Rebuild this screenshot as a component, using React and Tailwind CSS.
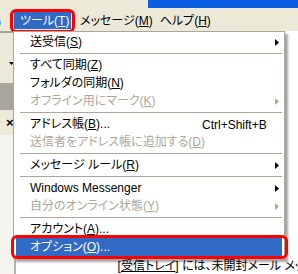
import React from "react";

function Label({ t, k, suffix }) {
  return (
    <span className="whitespace-nowrap">
      {t}
      {k ? (
        <>
          (<u className="underline-offset-1">{k}</u>)
        </>
      ) : null}
      {suffix}
    </span>
  );
}

function Arrow({ gray }) {
  return (
    <svg width="4" height="7" viewBox="0 0 4 7" className="block">
      <path d="M0 0 L4 3.5 L0 7 Z" fill={gray ? "#aca899" : "#000"} />
    </svg>
  );
}

const items = [
  { t: "送受信", k: "S", arrow: true },
  "sep",
  { t: "すべて同期", k: "Z" },
  { t: "フォルダの同期", k: "N" },
  { t: "オフライン用にマーク", k: "K", disabled: true, arrow: true },
  "sep",
  { t: "アドレス帳", k: "B", suffix: "...", shortcut: "Ctrl+Shift+B" },
  { t: "送信者をアドレス帳に追加する", k: "D", disabled: true },
  "sep",
  { t: "メッセージ ルール", k: "R", arrow: true },
  "sep",
  { t: "Windows Messenger", arrow: true },
  { t: "自分のオンライン状態", k: "Y", disabled: true, arrow: true },
  "sep",
  { t: "アカウント", k: "A", suffix: "..." },
  { t: "オプション", k: "O", suffix: "...", selected: true },
];

export default function App() {
  return (
    <div className="relative w-[298px] h-[274px] overflow-hidden bg-white text-[12px] leading-none text-black flex flex-col font-['Liberation_Sans','Noto_Sans_CJK_JP',sans-serif] [font-feature-settings:'palt']">
      {/* title bar */}
      <div className="h-[8px] shrink-0 bg-[#ece9d8] flex">
        <div className="w-[148px]" />
        <div className="flex-1 bg-[#0a5fe0]" />
      </div>
      {/* menu bar */}
      <div className="h-[23px] shrink-0 bg-[#ece9d8] flex items-center relative">
        <span className="absolute left-[-3px] top-[8px]">)</span>
        <div className="ml-[14px] h-[17px] w-[57px] bg-[#316ac5] text-white flex items-center pl-[6px] mt-[2px]">
          <Label t="ツール" k="T" />
        </div>
        <div className="ml-[9px] mt-[2px]">
          <Label t="メッセージ" k="M" />
        </div>
        <div className="ml-[7px] mt-[2px]">
          <Label t="ヘルプ" k="H" />
        </div>
        {/* red outline around ツール */}
        <div className="absolute left-[10px] top-[1px] w-[65px] h-[24px] rounded-[6px] border-[3px] border-[#ff0000]" />
      </div>
      {/* body background */}
      <div className="flex-1 flex">
        <div className="w-[25px] flex flex-col border-r-2 border-[#b8b4a8]">
          <div className="h-[2px] bg-[#a8a498]" />
          <div className="h-[50px] bg-[#ece9d8] relative">
            <svg width="5" height="3" viewBox="0 0 5 3" className="absolute left-[9px] top-[29px]">
              <path d="M0 0 H5 L2.5 3 Z" fill="#000" />
            </svg>
          </div>
          <div className="h-[27px] bg-[#a9a598]" />
          <div className="h-[25px] bg-[#ece9d8] flex items-center pl-[6px] font-bold text-[13px]">×</div>
          <div className="flex-1 bg-[#f4f3ee]" />
        </div>
        <div className="flex-1 flex flex-col">
          <div className="flex-1" />
          <div className="h-[16px] pl-[102px] whitespace-nowrap flex items-center">
            <span>
              [<u>受信トレイ</u>] には、未開封メール メッセ
            </span>
          </div>
        </div>
        <div className="w-[12px] flex flex-col">
          <div className="h-[59px] bg-[#ece9d8]" />
          <div className="h-[23px] bg-[#a8a498]" />
          <div className="h-[29px] bg-white" />
          <div className="h-[23px] bg-black" />
          <div className="h-[23px] bg-[#808080]" />
          <div className="flex-1 bg-white" />
        </div>
      </div>

      {/* dropdown menu */}
      <div className="absolute left-[13px] top-[31px] w-[272px] bg-white border border-[#aca899] pt-[1px] pb-[2px] shadow-[3px_3px_2px_rgba(0,0,0,0.35)]">
        {items.map((it, i) =>
          it === "sep" ? (
            <div key={i} className="h-[5px] flex items-center pl-[6px] pr-[2px]">
              <div className="h-px w-full bg-[#aca899]" />
            </div>
          ) : (
            <div
              key={i}
              className={
                "relative h-[18px] flex items-center pl-[14px] pr-[5px] mx-[2px] " +
                (it.selected ? "bg-[#316ac5] text-white" : it.disabled ? "text-[#aca899]" : "text-black")
              }
            >
              <Label t={it.t} k={it.k} suffix={it.suffix} />
              {it.shortcut ? (
                <span className="absolute left-[186px] top-[4px]">{it.shortcut}</span>
              ) : null}
              {it.arrow ? (
                <div className="absolute right-[3px] top-[6px]">
                  <Arrow gray={it.disabled} />
                </div>
              ) : null}
              {it.selected ? (
                <div className="absolute left-[-5px] top-[-3px] right-[-6px] bottom-[-3px] rounded-[6px] border-[3px] border-[#ff0000]" />
              ) : null}
            </div>
          )
        )}
      </div>
    </div>
  );
}
